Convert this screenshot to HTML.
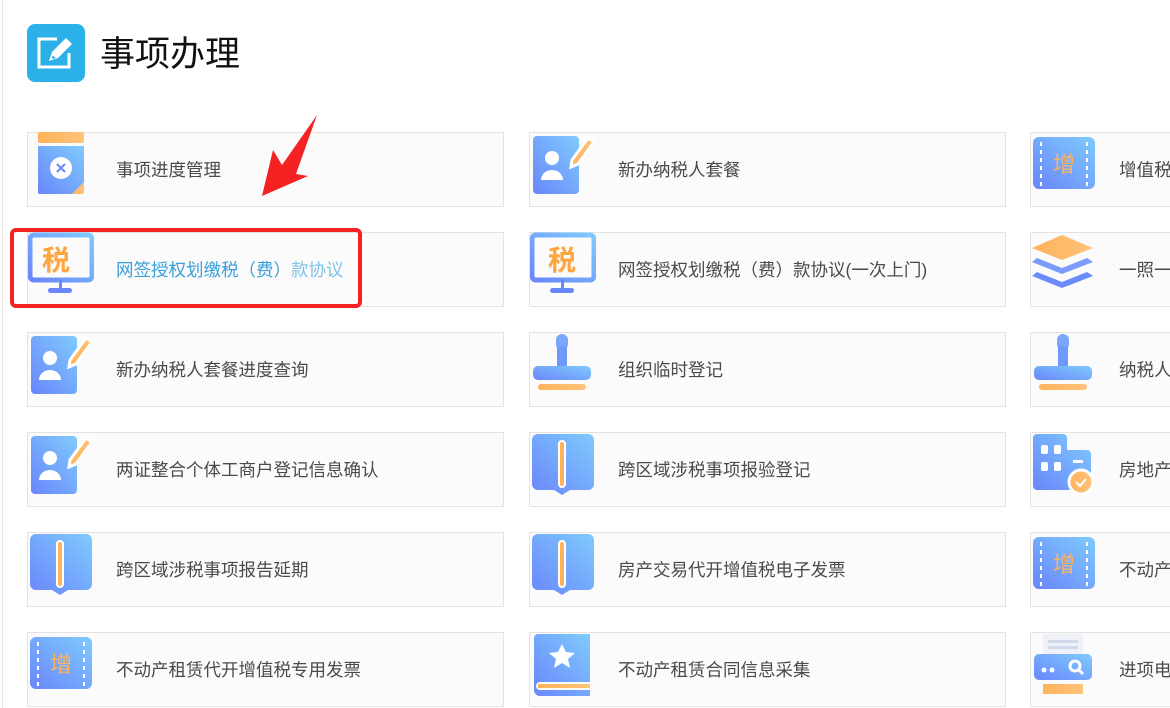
<!DOCTYPE html>
<html><head><meta charset="utf-8"><style>
body{margin:0;width:1170px;height:708px;overflow:hidden;background:#fff;font-family:"Liberation Sans","Noto Sans CJK SC",sans-serif;position:relative}
.vl{position:absolute;left:2px;top:0;width:1px;height:708px;background:#e4e4e4}
.hicon{position:absolute;left:27px;top:24px;width:58px;height:58px;background:#2bb1e7;border-radius:8px}
.title{position:absolute;left:100px;top:31px;font-size:35px;color:#111;line-height:48px}
.card{position:absolute;width:475px;height:73px;border:1px solid #e3e3e3;background:#fbfbfb;box-sizing:content-box}
.card svg{position:absolute;left:0;top:-1px}
.card span{position:absolute;left:88px;top:26px;font-size:17.5px;color:#4a4a4a;line-height:22px;white-space:nowrap}
.red{position:absolute;left:10px;top:228px;width:344px;height:72px;border:4px solid #f42222;border-radius:6px}
</style></head><body>
<div class="vl"></div>
<div class="hicon"><svg width="58" height="58" viewBox="0 0 58 58"><path d="M30 15H12v28h30V29" fill="none" stroke="#fff" stroke-width="3"/><path d="M22 37l3-9 14-14 6 6-14 14z" fill="#fff"/><path d="M25 33l3 1" stroke="#2bb1e7" stroke-width="2"/></svg></div>
<div class="title">事项办理</div>

<svg width="0" height="0" style="position:absolute"><defs>
<linearGradient id="g" x1="0" y1="1" x2="1" y2="0"><stop offset="0" stop-color="#6a86fb"/><stop offset="1" stop-color="#7fcbfd"/></linearGradient>
<linearGradient id="o" x1="0" y1="0" x2="1" y2="0"><stop offset="0" stop-color="#ffb25a"/><stop offset="1" stop-color="#ffc37a"/></linearGradient>
</defs></svg>

<!-- row1 -->
<div class="card" style="left:27px;top:132px"><svg width="66" height="66"><rect x="10" y="0" width="46" height="11" rx="2" fill="url(#o)"/><path d="M10 14h46v36l-12 12H12a2 2 0 0 1-2-2z" fill="url(#g)"/><path d="M44 62l12-12v10a2 2 0 0 1-2 2z" fill="url(#o)"/><circle cx="33" cy="36" r="11" fill="#fff"/><path d="M29 32l8 8M37 32l-8 8" stroke="#6a86fb" stroke-width="2"/></svg><span>事项进度管理</span></div>
<div class="card" style="left:529px;top:132px"><svg width="66" height="66"><rect x="3" y="4" width="46" height="58" rx="4" fill="url(#g)"/><circle cx="22" cy="26" r="7" fill="#fff"/><path d="M11 48a11 10 0 0 1 22 0z" fill="#fff"/><path d="M42 28l16-22 6 4-16 22-7 3z" fill="url(#o)" stroke="#fff" stroke-width="3"/></svg><span>新办纳税人套餐</span></div>
<div class="card" style="left:1030px;top:132px"><svg width="66" height="66"><rect x="2" y="5" width="62" height="52" rx="6" fill="url(#g)"/><path d="M10 10v44M56 10v44" stroke="#fff" stroke-width="2" stroke-dasharray="4 4"/><text x="33" y="40" text-anchor="middle" font-size="22" fill="#ffb25a" font-family="Noto Sans CJK SC">增</text></svg><span>增值税</span></div>
<!-- row2 -->
<div class="card" style="left:27px;top:232px"><svg width="66" height="66"><rect x="2" y="3" width="62" height="45" rx="4" fill="none" stroke="url(#g)" stroke-width="5"/><text x="28" y="38" text-anchor="middle" font-size="28" font-weight="bold" fill="#ffa53d" font-family="Noto Sans CJK SC">税</text><rect x="31" y="48" width="3" height="10" fill="#6a86fb"/><rect x="20" y="56" width="24" height="5" rx="2.5" fill="#6a86fb"/></svg><span style="color:#3aa0d8">网签授权划缴税（费）<b style="font-weight:normal;color:#7fc4e6">款协议</b></span></div>
<div class="card" style="left:529px;top:232px"><svg width="66" height="66"><rect x="2" y="3" width="62" height="45" rx="4" fill="none" stroke="url(#g)" stroke-width="5"/><text x="32" y="38" text-anchor="middle" font-size="28" font-weight="bold" fill="#ffa53d" font-family="Noto Sans CJK SC">税</text><rect x="31" y="48" width="3" height="10" fill="#6a86fb"/><rect x="20" y="56" width="24" height="5" rx="2.5" fill="#6a86fb"/></svg><span>网签授权划缴税（费）款协议(一次上门)</span></div>
<div class="card" style="left:1030px;top:232px"><svg width="66" height="66"><path d="M31 3l31 13-31 12L1 16z" fill="url(#o)"/><path d="M6 26l25 10 25-10 6 4-31 12L1 30z" fill="#7a9cfc"/><path d="M6 40l25 10 25-10 6 4-31 12L1 44z" fill="#6a8dfb"/></svg><span>一照一</span></div>
<!-- row3 -->
<div class="card" style="left:27px;top:332px"><svg width="66" height="66"><rect x="3" y="4" width="46" height="58" rx="4" fill="url(#g)"/><circle cx="22" cy="26" r="7" fill="#fff"/><path d="M11 48a11 10 0 0 1 22 0z" fill="#fff"/><path d="M42 28l16-22 6 4-16 22-7 3z" fill="url(#o)" stroke="#fff" stroke-width="3"/></svg><span>新办纳税人套餐进度查询</span></div>
<div class="card" style="left:529px;top:332px"><svg width="66" height="66"><rect x="26" y="2" width="12" height="16" rx="6" fill="#7aa6fc"/><rect x="27" y="14" width="10" height="20" fill="#6f9afc"/><rect x="3" y="34" width="58" height="14" rx="5" fill="url(#g)"/><rect x="8" y="52" width="48" height="6" rx="3" fill="url(#o)"/></svg><span>组织临时登记</span></div>
<div class="card" style="left:1030px;top:332px"><svg width="66" height="66"><rect x="26" y="2" width="12" height="16" rx="6" fill="#7aa6fc"/><rect x="27" y="14" width="10" height="20" fill="#6f9afc"/><rect x="3" y="34" width="58" height="14" rx="5" fill="url(#g)"/><rect x="8" y="52" width="48" height="6" rx="3" fill="url(#o)"/></svg><span>纳税人</span></div>
<!-- row4 -->
<div class="card" style="left:27px;top:432px"><svg width="66" height="66"><rect x="3" y="4" width="46" height="58" rx="4" fill="url(#g)"/><circle cx="22" cy="26" r="7" fill="#fff"/><path d="M11 48a11 10 0 0 1 22 0z" fill="#fff"/><path d="M42 28l16-22 6 4-16 22-7 3z" fill="url(#o)" stroke="#fff" stroke-width="3"/></svg><span>两证整合个体工商户登记信息确认</span></div>
<div class="card" style="left:529px;top:432px"><svg width="66" height="66"><path d="M2 8a6 6 0 0 1 6-6h50a6 6 0 0 1 6 6v44a6 6 0 0 1-6 6H40l-8 5-8-5H8a6 6 0 0 1-6-6z" fill="url(#g)"/><rect x="28" y="8" width="8" height="48" rx="4" fill="#fff"/><rect x="30" y="10" width="4" height="44" rx="2" fill="#ffb25a"/></svg><span>跨区域涉税事项报验登记</span></div>
<div class="card" style="left:1030px;top:432px"><svg width="66" height="66"><path d="M2 6a4 4 0 0 1 4-4h26a4 4 0 0 1 4 4v12h20a4 4 0 0 1 4 4v36H6a4 4 0 0 1-4-4z" fill="url(#g)"/><rect x="10" y="13" width="7" height="9" rx="2" fill="#fff"/><rect x="23" y="13" width="7" height="9" rx="2" fill="#fff"/><rect x="10" y="30" width="7" height="9" rx="2" fill="#fff"/><rect x="23" y="30" width="7" height="9" rx="2" fill="#fff"/><rect x="42" y="28" width="10" height="3" fill="#fff"/><circle cx="50" cy="50" r="12" fill="url(#o)" stroke="#fff" stroke-width="3"/><path d="M45 50l4 4 6-7" stroke="#fff" stroke-width="2" fill="none"/></svg><span>房地产</span></div>
<!-- row5 -->
<div class="card" style="left:27px;top:532px"><svg width="66" height="66"><path d="M2 8a6 6 0 0 1 6-6h50a6 6 0 0 1 6 6v44a6 6 0 0 1-6 6H40l-8 5-8-5H8a6 6 0 0 1-6-6z" fill="url(#g)"/><rect x="28" y="8" width="8" height="48" rx="4" fill="#fff"/><rect x="30" y="10" width="4" height="44" rx="2" fill="#ffb25a"/></svg><span>跨区域涉税事项报告延期</span></div>
<div class="card" style="left:529px;top:532px"><svg width="66" height="66"><path d="M2 8a6 6 0 0 1 6-6h50a6 6 0 0 1 6 6v44a6 6 0 0 1-6 6H40l-8 5-8-5H8a6 6 0 0 1-6-6z" fill="url(#g)"/><rect x="28" y="8" width="8" height="48" rx="4" fill="#fff"/><rect x="30" y="10" width="4" height="44" rx="2" fill="#ffb25a"/></svg><span>房产交易代开增值税电子发票</span></div>
<div class="card" style="left:1030px;top:532px"><svg width="66" height="66"><rect x="2" y="5" width="62" height="52" rx="6" fill="url(#g)"/><path d="M10 10v44M56 10v44" stroke="#fff" stroke-width="2" stroke-dasharray="4 4"/><text x="33" y="40" text-anchor="middle" font-size="22" fill="#ffb25a" font-family="Noto Sans CJK SC">增</text></svg><span>不动产</span></div>
<!-- row6 -->
<div class="card" style="left:27px;top:632px"><svg width="66" height="66"><rect x="2" y="5" width="62" height="52" rx="6" fill="url(#g)"/><path d="M10 10v44M56 10v44" stroke="#fff" stroke-width="2" stroke-dasharray="4 4"/><text x="33" y="40" text-anchor="middle" font-size="22" fill="#ffb25a" font-family="Noto Sans CJK SC">增</text></svg><span>不动产租赁代开增值税专用发票</span></div>
<div class="card" style="left:529px;top:632px"><svg width="66" height="66"><path d="M4 6a4 4 0 0 1 4-4h52v48H10a4 4 0 0 0 0 8h50v6H10a6 6 0 0 1-6-6z" fill="url(#g)"/><rect x="8" y="52" width="52" height="4" fill="url(#o)"/><path d="M32 12l4 8 9 1-7 6 2 9-8-5-8 5 2-9-7-6 9-1z" fill="#fff"/></svg><span>不动产租赁合同信息采集</span></div>
<div class="card" style="left:1030px;top:632px"><svg width="66" height="66"><rect x="12" y="2" width="40" height="22" rx="3" fill="#eef1f7"/><rect x="17" y="8" width="30" height="3" fill="#cfd8ec"/><rect x="17" y="14" width="30" height="3" fill="#cfd8ec"/><rect x="3" y="22" width="58" height="26" rx="5" fill="url(#g)"/><circle cx="13" cy="38" r="2.5" fill="#fff"/><circle cx="21" cy="38" r="2.5" fill="#fff"/><circle cx="44" cy="34" r="5" fill="none" stroke="#fff" stroke-width="3"/><path d="M48 38l4 4" stroke="#fff" stroke-width="3"/><rect x="12" y="52" width="40" height="10" fill="url(#o)"/></svg><span>进项电</span></div>

<div class="red"></div>
<svg style="position:absolute;left:250px;top:110px" width="80" height="95"><polygon points="67,5 46,64 58,66 12,86 23,40 32,55" fill="#f42222"/></svg>
</body></html>
